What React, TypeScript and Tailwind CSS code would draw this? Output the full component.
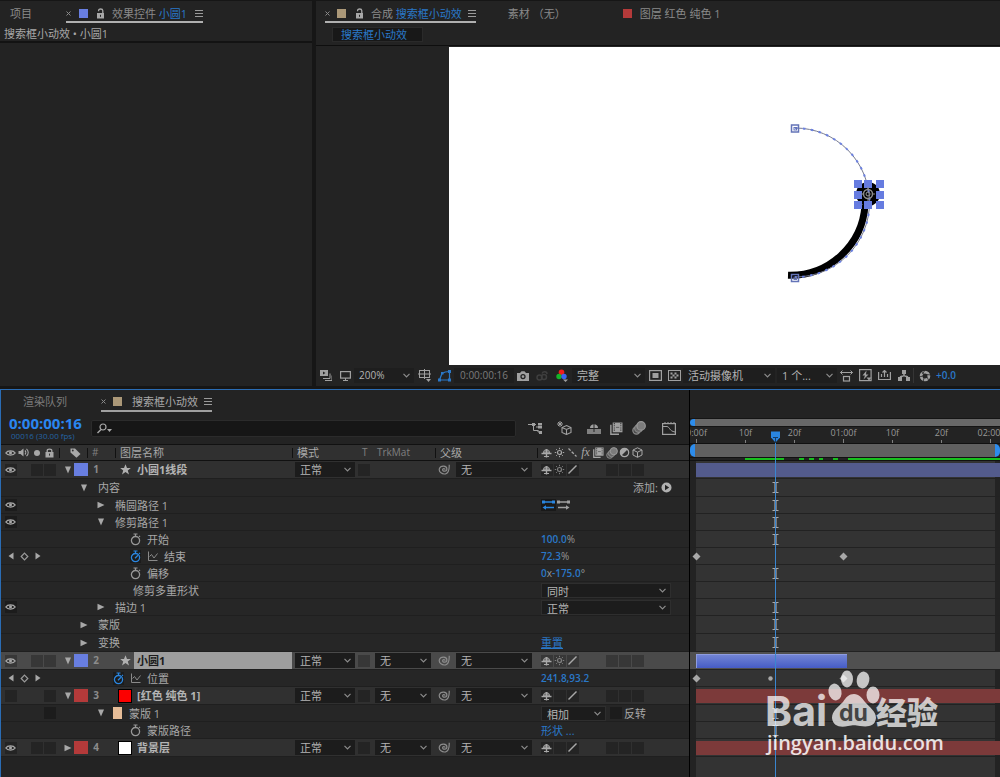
import type { ReactNode } from "react";

const PX_PER_FRAME = 4.9;
const PLAYHEAD = 16;

const BLUE = "#2a86e0";

type Kind = "layer" | "group" | "subgroup" | "prop";

type Row = {
  id: string;
  kind: Kind;
  name: string;
  eye?: boolean;
  num?: number;
  color?: string;
  source?: string;
  open?: boolean;
  selected?: boolean;
  trkMat?: boolean;
  collapse?: boolean;
  bar?: string;
  barFrames?: number;
  keys?: number[];
  roving?: number[];
  beam?: boolean;
  timed?: "off" | "on";
  indent?: string;
  nav?: boolean;
  lockBox?: boolean;
  swatch?: boolean;
  value?: ReactNode;
};

function Svg({ w, h, children, className = "" }: { w: number; h: number; children: ReactNode; className?: string }) {
  return (
    <svg width={w} height={h} viewBox={`0 0 ${w} ${h}`} fill="none" stroke="currentColor" className={`shrink-0 ${className}`} aria-hidden="true">
      {children}
    </svg>
  );
}

function Eye() {
  return (
    <Svg w={11} h={8}>
      <path d="M0.8 4C2.6 1.2 8.4 1.2 10.2 4C8.4 6.8 2.6 6.8 0.8 4Z" strokeWidth="1.3" />
      <circle cx="5.5" cy="3.8" r="1.5" fill="currentColor" stroke="none" />
    </Svg>
  );
}

function Unlock() {
  return (
    <Svg w={9} h={11} className="text-[#a8a8a8]">
      <rect x="1" y="5" width="7" height="5.5" fill="currentColor" stroke="none" />
      <path d="M2.6 3.2V2.4C2.6 0.5 6.6 0.5 6.8 2.6V5" strokeWidth="1.3" />
      <path d="M4.5 6.8v2" stroke="#232323" />
    </Svg>
  );
}

function Lock() {
  return (
    <Svg w={9} h={10}>
      <rect x="0.5" y="4" width="8" height="5.5" fill="currentColor" stroke="none" />
      <path d="M2.2 4.5V2.5C2.2 0.7 6.8 0.7 6.8 2.5v2" strokeWidth="1.3" />
      <path d="M4.5 5.6v2" stroke="#303030" />
    </Svg>
  );
}

function Menu() {
  return (
    <Svg w={8} h={8} className="text-[#9a9a9a]">
      <path d="M0 1.5h8M0 4.5h8M0 7.5h8" />
    </Svg>
  );
}

function Close() {
  return (
    <Svg w={5} h={5} className="text-[#8a8a8a]">
      <path d="M0.5 0.5l4 4M4.5 0.5l-4 4" />
    </Svg>
  );
}

function Twirl({ open }: { open?: boolean }) {
  return (
    <Svg w={10} h={8} className="text-[#a8a8a8]">
      {open ? <path d="M2 0.5h6L5 7.5Z" fill="currentColor" stroke="none" /> : <path d="M1.5 0.8v6.4L8.5 4Z" fill="currentColor" stroke="none" />}
    </Svg>
  );
}

function Stopwatch({ on }: { on?: boolean }) {
  return (
    <Svg w={11} h={13} className={on ? "bg-[#1c1c1c] text-[#2a86e0]" : "text-[#989898]"}>
      <circle cx="5.5" cy="7.6" r="4.1" strokeWidth="1.3" />
      <path d="M3.5 1h4M5.5 1v2.4M9 2.8l1 1" strokeWidth="1.2" />
      {on && <path d="M5 8.2l3-3" strokeWidth="1.3" />}
    </Svg>
  );
}

function Graph() {
  return (
    <Svg w={11} h={11} className="text-[#8a8a8a]">
      <path d="M1.5 0.5v9h9" />
      <path d="M2.5 5.5L4.5 3.5L7 7L10.5 2.5" />
    </Svg>
  );
}

function Shy() {
  return (
    <Svg w={11} h={10}>
      <path d="M2 5C2 0 9 0 9 5Z" fill="currentColor" stroke="none" />
      <path d="M0.5 5.5h10M5.5 1v8.5" strokeWidth="1.4" />
      <path d="M3 8.5h5" />
      <path d="M4 2.5v2M7 2.5v2" stroke="#303030" strokeWidth="0.8" />
    </Svg>
  );
}

function Sun() {
  return (
    <Svg w={11} h={11}>
      <circle cx="5.5" cy="5.5" r="2" strokeWidth="1.2" />
      <path d="M5.5 0.8v1.4M5.5 8.8v1.4M0.8 5.5h1.4M8.8 5.5h1.4M2.2 2.2l1 1M7.8 7.8l1 1M8.8 2.2l-1 1M3.2 7.8l-1 1" />
    </Svg>
  );
}

function Slash() {
  return (
    <Svg w={11} h={11}>
      <path d="M1.5 9.5l8-8" strokeWidth="1.5" />
    </Svg>
  );
}

function Film({ big }: { big?: boolean }) {
  return (
    <svg width={big ? 13 : 11} height={big ? 13 : 11} viewBox="0 0 12 12" fill="none" stroke="currentColor" aria-hidden="true">
      <path d="M0.8 2.5v8.8h7.5" strokeWidth="1.3" />
      <rect x="2.5" y="0.5" width="9" height="9" fill="currentColor" stroke="none" />
      <path d="M4 1v8M10 1v8" stroke="#333" strokeDasharray="1 1" />
      <path d="M5.5 5h3" stroke="#666" />
    </svg>
  );
}

function Blur({ big }: { big?: boolean }) {
  return (
    <svg width={big ? 14 : 12} height={big ? 14 : 12} viewBox="0 0 12 12" fill="none" aria-hidden="true">
      <circle cx="3.8" cy="8.2" r="3.1" fill="#4a4a4a" stroke="#8a8a8a" />
      <circle cx="5.6" cy="6.4" r="3.3" fill="#666" stroke="#8a8a8a" />
      <circle cx="7.8" cy="4.2" r="3.6" fill="#7c7c7c" stroke="#9a9a9a" />
    </svg>
  );
}

function Cube() {
  return (
    <Svg w={11} h={11}>
      <path d="M5.5 0.8L10 3v5L5.5 10.3L1 8V3ZM1 3l4.5 2.2L10 3M5.5 5.2v5" />
    </Svg>
  );
}

function Spiral() {
  return (
    <Svg w={12} h={11} className="text-[#8c8c8c]">
      <path d="M7.2 5.6C7 4.2 4.6 4.2 4.6 5.8C4.6 7.8 8.9 7.8 8.9 5C8.9 1.4 2.6 1 1.4 4.6C0.4 8.2 4.5 10.6 7.6 9.8C10.4 9 11.4 5.4 11.2 0.8" strokeWidth="1.2" />
    </Svg>
  );
}

function Select({ label, options, className, tone = "bg-[#1c1c1c]" }: { label: string; options: string[]; className: string; tone?: string }) {
  return (
    <span className={`relative flex h-[15px] shrink-0 items-center ${tone} ${className}`}>
      <select aria-label={label} className="h-full w-full appearance-none bg-transparent pl-[5px] leading-[15px] text-[#b4b4b4] outline-none">
        {options.map((o) => (
          <option key={o}>{o}</option>
        ))}
      </select>
      <Svg w={7} h={5} className="pointer-events-none absolute right-1 text-[#8c8c8c]">
        <path d="M0.5 0.8l3 3l3-3" strokeWidth="1.2" />
      </Svg>
    </span>
  );
}

function Box({ children, className = "text-[#a8a8a8]" }: { children?: ReactNode; className?: string }) {
  return (
    <span className="flex w-[13px] shrink-0 justify-center">
      <span className={`flex size-[12px] items-center justify-center bg-black/25 ${className}`}>{children}</span>
    </span>
  );
}

function Num({ children, unit }: { children: ReactNode; unit?: string }) {
  return (
    <button type="button" className="text-[10px] text-[#2a78c8]">
      <span className="font-semibold">{children}</span>
      {unit && <span className="text-[#989898]">{unit}</span>}
    </button>
  );
}

const ROWS: Row[] = [
  { id: "l1", kind: "layer", name: "小圆1线段", eye: true, num: 1, color: "#687ee0", source: "star", open: true, trkMat: false, collapse: true, bar: "bg-[#535b8c]" },
  {
    id: "contents",
    kind: "group",
    name: "内容",
    open: true,
    beam: true,
    value: (
      <button type="button" className="ml-[92px] flex items-center gap-[3px]">
        添加:
        <Svg w={11} h={11} className="text-[#b0b0b0]">
          <circle cx="5.5" cy="5.5" r="5" fill="currentColor" stroke="none" />
          <path d="M4 2.8v5.4L8.2 5.5Z" fill="#222" stroke="none" />
        </Svg>
      </button>
    ),
  },
  {
    id: "ellipse",
    kind: "subgroup",
    name: "椭圆路径 1",
    eye: true,
    beam: true,
    value: (
      <>
        <button type="button" aria-label="路径方向开" className="bg-[#191919] text-[#2a86e0]">
          <Svg w={15} h={12}>
            <path d="M2 3h11M4 8.5h9" strokeWidth="1.3" />
            <path d="M1 1.5h3v3h-3zM11 1.5h3v3h-3zM1.500 8.500L5 6.200v4.600z" fill="currentColor" stroke="none" />
          </Svg>
        </button>
        <button type="button" aria-label="路径方向关" className="text-[#a0a0a0]">
          <Svg w={15} h={12}>
            <path d="M2 3h11M2 8.5h9" strokeWidth="1.3" />
            <path d="M1 1.5h3v3h-3zM11 1.5h3v3h-3zM13.500 8.500L10 6.200v4.600z" fill="currentColor" stroke="none" />
          </Svg>
        </button>
      </>
    ),
  },
  { id: "trim", kind: "subgroup", name: "修剪路径 1", eye: true, open: true, beam: true },
  { id: "start", kind: "prop", name: "开始", timed: "off", beam: true, value: <Num unit="%">100.0</Num> },
  { id: "end", kind: "prop", name: "结束", timed: "on", nav: true, keys: [0, 30], value: <Num unit="%">72.3</Num> },
  {
    id: "offset",
    kind: "prop",
    name: "偏移",
    timed: "off",
    beam: true,
    value: (
      <Num unit="°">
        0<span className="font-normal text-[#989898]">x</span>-175.0
      </Num>
    ),
  },
  { id: "multi", kind: "prop", name: "修剪多重形状", indent: "pl-[78px]", value: <Select label="修剪多重形状" options={["同时", "单独"]} className="w-[130px] border border-[#2e2e2e]" /> },
  { id: "stroke", kind: "subgroup", name: "描边 1", eye: true, beam: true, value: <Select label="描边 1 模式" options={["正常", "相乘"]} className="w-[130px] border border-[#2e2e2e]" /> },
  { id: "masks1", kind: "group", name: "蒙版", beam: true },
  {
    id: "transform",
    kind: "group",
    name: "变换",
    beam: true,
    value: (
      <button type="button" className="text-[#2a78c8] underline">
        重置
      </button>
    ),
  },
  { id: "l2", kind: "layer", name: "小圆1", eye: true, num: 2, color: "#687ee0", source: "star", open: true, selected: true, trkMat: true, collapse: true, bar: "bg-linear-to-b from-[#7284d4] to-[#465cc6] border-l border-t border-[#8e9ce0]", barFrames: 31 },
  { id: "pos", kind: "prop", name: "位置", timed: "on", indent: "pl-[58px]", nav: true, keys: [0, 30], roving: [15], value: <Num>241.8,93.2</Num> },
  { id: "l3", kind: "layer", name: "[红色 纯色 1]", num: 3, color: "#b43a3a", source: "bg-[#fc0000]", open: true, trkMat: true, bar: "bg-[#7c3a3a]" },
  {
    id: "mask1",
    kind: "subgroup",
    name: "蒙版 1",
    open: true,
    swatch: true,
    lockBox: true,
    beam: true,
    value: (
      <>
        <Select label="蒙版模式" options={["相加", "相减"]} className="w-[65px] border border-[#2e2e2e]" />
        <label className="ml-1 flex items-center gap-[2px]">
          <input type="checkbox" className="size-[12px] appearance-none bg-[#1c1c1c] checked:bg-[#2a86e0]" />
          反转
        </label>
      </>
    ),
  },
  {
    id: "maskpath",
    kind: "prop",
    name: "蒙版路径",
    timed: "off",
    beam: true,
    value: (
      <button type="button" className="text-[#2a78c8]">
        形状 ...
      </button>
    ),
  },
  { id: "l4", kind: "layer", name: "背景层", eye: true, num: 4, color: "#b43a3a", source: "bg-white", trkMat: true, bar: "bg-[#7c3a3a]" },
];

// layers and top level groups are a pixel taller than the properties in them
function rowHeight(kind: Kind) {
  return kind === "layer" || kind === "group" ? "h-[18px]" : "h-[17px]";
}

function KeyNav() {
  return (
    <>
      <button type="button" aria-label="上一个关键帧" className="flex w-[13px] justify-center text-[#a8a8a8]">
        <Svg w={6} h={8}>
          <path d="M5.5 0.5v7L0.5 4Z" fill="currentColor" stroke="none" />
        </Svg>
      </button>
      <button type="button" aria-label="关键帧" className="flex w-[14px] justify-center text-[#9a9a9a]">
        <Svg w={9} h={9}>
          <path d="M4.5 1.2L7.8 4.5L4.5 7.8L1.2 4.5Z" strokeWidth="1.2" />
        </Svg>
      </button>
      <button type="button" aria-label="下一个关键帧" className="flex w-[13px] justify-center text-[#a8a8a8]">
        <Svg w={6} h={8}>
          <path d="M0.5 0.5v7l5-3.5Z" fill="currentColor" stroke="none" />
        </Svg>
      </button>
    </>
  );
}

function LayerRow({ row }: { row: Row }) {
  return (
    <div className={`flex items-center border-b border-[#1f1f1f] ${rowHeight(row.kind)} ${row.selected ? "bg-[#4a4a4a]" : "bg-[#303030]"}`}>
      <div className="flex w-[58px] shrink-0 pl-[3px]">
        <Box>{row.eye && <Eye />}</Box>
        <span className="w-[13px]" />
        {row.id === "l3" ? <span className="w-[13px]" /> : <Box />}
        <Box />
      </div>
      <button type="button" aria-label={`展开 ${row.name}`} className="ml-[2px] flex w-[13px] shrink-0 justify-center">
        <Twirl open={row.open} />
      </button>
      <span className="h-[13px] w-[14px] shrink-0" style={{ background: row.color }} />
      <span className="w-[16px] shrink-0 text-center text-[10px] font-bold text-[#8c8c8c]">{row.num}</span>
      <span className="ml-[14px] flex w-[14px] shrink-0 justify-center">
        {row.source === "star" ? (
          <Svg w={11} h={11} className="text-[#b0b0b0]">
            <path d="M5.5 0.3L7 4h3.8L7.8 6.4L9 10.4L5.5 8L2 10.4L3.2 6.4L0.2 4H4Z" fill="currentColor" stroke="none" />
          </Svg>
        ) : (
          <span className={`size-[14px] border border-black ${row.source}`} />
        )}
      </span>
      <span className={`ml-[2px] flex h-full min-w-0 flex-1 items-center pl-[3px] font-bold ${row.selected ? "bg-[#9e9e9e] text-[#1c1c1c]" : "text-[#b4b4b4]"}`}>{row.name}</span>
      <span className="flex w-[248px] shrink-0 items-center pl-[3px]">
        <Select label="模式" options={["正常", "相乘"]} className="w-[60px]" />
        <span className="ml-[2px] flex w-[18px]">
          <Box />
        </span>
        {row.trkMat ? <Select label="TrkMat" options={["无", "Alpha"]} className="w-[56px]" /> : <span className="w-[56px]" />}
        <span className="flex w-[25px] justify-center">
          <Spiral />
        </span>
        <Select label="父级" options={["无"]} className="w-[76px]" />
      </span>
      <span className="flex w-[149px] shrink-0">
        <Box>
          <Shy />
        </Box>
        <Box className="text-[#808080]">{row.collapse && <Sun />}</Box>
        <Box>
          <Slash />
        </Box>
        <span className="w-[26px]" />
        <Box />
        <Box />
        <Box />
      </span>
    </div>
  );
}

function PropRow({ row }: { row: Row }) {
  const indent = row.indent ?? (row.kind === "group" ? "pl-[24px]" : row.kind === "subgroup" ? "pl-[41px]" : "pl-[75px]");
  return (
    <div className={`flex items-center border-b border-[#1f1f1f] bg-[#262626] ${rowHeight(row.kind)}`}>
      <div className="flex w-[54px] shrink-0 items-center pl-[3px]">
        {row.nav && <KeyNav />}
        {row.eye && (
          <Box>
            <Eye />
          </Box>
        )}
        {row.lockBox && (
          <span className="ml-[39px] flex">
            <Box />
          </span>
        )}
      </div>
      <div className={`flex min-w-0 flex-1 items-center ${indent} ${row.kind === "prop" ? "gap-[6px]" : row.swatch ? "gap-[7px]" : "gap-[9px]"}`}>
        {row.kind !== "prop" && (
          <button type="button" aria-label={`展开 ${row.name}`}>
            <Twirl open={row.open} />
          </button>
        )}
        {row.swatch && <span className="h-[12px] w-[9px] bg-[#e6bd98]" />}
        {row.timed && <Stopwatch on={row.timed === "on"} />}
        {row.timed === "on" && <Graph />}
        <span>{row.name}</span>
      </div>
      <div className="flex w-[148px] shrink-0 items-center">{row.value}</div>
    </div>
  );
}

function Key({ frame, dot }: { frame: number; dot?: boolean }) {
  return (
    <span className="absolute top-0 -ml-[4px] flex h-full items-center text-[#a8a8a8]" style={{ left: Math.round(6 + frame * PX_PER_FRAME) }}>
      <Svg w={9} h={9}>
        {dot ? <circle cx="4.5" cy="4.5" r="2.2" fill="currentColor" stroke="none" /> : <path d="M4.5 0.5L8.5 4.5L4.5 8.5L0.5 4.5Z" fill="currentColor" stroke="none" />}
      </Svg>
    </span>
  );
}

function TrackRow({ row }: { row: Row }) {
  return (
    <div className={`relative flex items-center border-b border-[#222] pl-[6px] ${rowHeight(row.kind)} ${row.selected ? "bg-[#505050]" : ""}`}>
      {row.bar && <span className={`h-[14px] ${row.barFrames ? "" : "flex-1"} ${row.bar}`} style={row.barFrames ? { width: Math.floor(row.barFrames * PX_PER_FRAME) } : undefined} />}
      {row.keys?.map((k) => <Key key={k} frame={k} />)}
      {row.roving?.map((k) => <Key key={k} frame={k} dot />)}
      {row.beam && (
        <Svg w={7} h={11} className="ml-[76px] text-[#a8a8a8]">
          <path d="M0.5 0.5h6M0.5 10.5h6" />
          <path d="M3.5 0.5v10" strokeWidth="3" opacity="0.6" />
        </Svg>
      )}
    </div>
  );
}

function Watermark() {
  return (
    <svg width="190" height="110" viewBox="0 0 190 110" className="pointer-events-none absolute bottom-0 left-[72px]" fill="#fff" aria-hidden="true">
      <g opacity="0.72">
        <text x="3" y="59" fontSize="41" fontWeight="700" fontFamily="Inter, sans-serif">
          Bai
        </text>
        <ellipse cx="73" cy="25" rx="6.5" ry="8.5" transform="rotate(-12 73 25)" />
        <ellipse cx="85" cy="12" rx="6" ry="8.5" />
        <ellipse cx="101" cy="13" rx="6.3" ry="8.5" transform="rotate(10 101 13)" />
        <ellipse cx="111" cy="28" rx="6.5" ry="8.5" />
        <path d="M92 27C97 27 100 31 103 35C108 41 114 44 114 51C113 60 105 60 98 59C93 58 91 58 86 59C78 61 71 59 70 51C70 44 76 40 81 35C84 30 87 27 92 27Z" />
        <text x="114" y="57" fontSize="31" fontWeight="900" fontFamily="'Noto Sans CJK SC', sans-serif">
          经验
        </text>
      </g>
      <text x="77" y="54" fontSize="23" fontWeight="700" fontFamily="Inter, sans-serif" fill="#444">
        du
      </text>
      <text x="5" y="83" fontSize="20" fontWeight="600" fontFamily="'Open Sans', sans-serif" opacity="0.85">
        jingyan.baidu.com
      </text>
    </svg>
  );
}

// local coordinates of the composition view
function Canvas() {
  const handles = [
    [409, 137], [419, 137], [431, 137],
    [409, 148], [431, 148],
    [409, 158], [419, 158], [431, 158],
  ];
  return (
    <svg width="551" height="318" viewBox="0 0 551 318" fill="none" className="max-w-full">
      <path d="M339 228.300A75 75 0 0 0 416 158" stroke="#000" strokeWidth="7" />
      <circle cx="419" cy="147" r="12" fill="#000" />
      <path d="M346 81A74 74 0 0 1 346 230" stroke="#777b90" strokeWidth="1" />
      <path d="M346 81A74 74 0 0 1 346 230" stroke="#6b80e0" strokeWidth="2" strokeDasharray="2.500 5.500" />
      <g stroke="#6474b8" strokeWidth="1.500">
        <rect x="342.500" y="78" width="7" height="7" />
        <rect x="342.500" y="227.500" width="7" height="7" />
        <rect x="345" y="80.500" width="2.500" height="2.500" strokeWidth="1" />
        <rect x="345" y="230" width="2.500" height="2.500" strokeWidth="1" />
      </g>
      {handles.map(([x, y]) => (
        <rect key={`${x}-${y}`} x={x - 4} y={y - 4} width="8" height="8" fill="#667ce0" />
      ))}
      <circle cx="419" cy="147" r="4.500" stroke="#8c8c8c" strokeWidth="1.500" />
      <circle cx="419" cy="147" r="2" stroke="#999" />
      <path d="M419 140v3M419 151v3M412 147h3M423 147h3" stroke="#8c8c8c" />
    </svg>
  );
}

function EffectPanel() {
  return (
    <section className="flex w-[312px] shrink-0 flex-col bg-[#232323]">
      <nav className="flex h-[22px] items-stretch pl-[10px]">
        <button type="button" className="pt-[2px] text-[#8a8a8a]">项目</button>
        <div className="ml-[34px] flex items-center border-b-2 border-[#b0b0b0] pt-1">
          <Close />
          <span className="ml-2 size-[9px] bg-[#687ee0]" />
          <span className="ml-2 flex"><Unlock /></span>
          <button type="button" className="ml-[7px] text-[#8a8a8a]">
            效果控件 <span className="text-[#2a78c8]">小圆1</span>
          </button>
          <span className="ml-2 flex"><Menu /></span>
        </div>
      </nav>
      <h2 className="h-[20px] border-b-2 border-[#131313] pl-1 leading-[21px] text-[#a8a8a8]">搜索框小动效 • 小圆1</h2>
    </section>
  );
}

function ViewerBar() {
  return (
    <div className="flex h-[21px] items-center text-[#a0a0a0]">
      <span className="flex w-5 justify-center">
        <Svg w={12} h={11}>
          <rect x="0.5" y="0.5" width="7" height="5" fill="currentColor" />
          <path d="M3 8.500h7V3.500M5 10.500h7V5.500" />
          <path d="M3 1.500v3l2.500-1.500Z" fill="#232323" stroke="none" />
        </Svg>
      </span>
      <span className="flex w-[18px] justify-center">
        <Svg w={11} h={10}>
          <rect x="0.600" y="0.600" width="9.800" height="6.500" strokeWidth="1.200" />
          <path d="M3 9.500h5M5.500 7v2" />
        </Svg>
      </span>
      <Select label="缩放" options={["200%", "100%"]} tone="bg-[#1e1e1e]" className="w-[60px] text-[10px]" />
      <span className="flex w-5 justify-center">
        <Svg w={13} h={13}>
          <rect x="1.500" y="1.500" width="10" height="7" />
          <path d="M6.500 0v10M0 5h13" />
          <path d="M8 10h5l-2.500 3Z" fill="currentColor" stroke="none" />
        </Svg>
      </span>
      <button type="button" aria-label="蒙版可见性" className="flex w-5 justify-center text-[#2a78c8]">
        <Svg w={13} h={12}>
          <path d="M1.500 10L4 3.500C6 2 9 1.500 11.500 1.500V10Z" strokeWidth="1.200" />
          <path d="M0 8.500h3v3H0zM10 8.500h3v3h-3zM10 0h3v3h-3zM3 2h2.500v2.500H3z" fill="currentColor" stroke="none" />
        </Svg>
      </button>
      <span className="flex h-[15px] w-[60px] items-center justify-center bg-[#1e1e1e] text-[10px] text-[#7c7c7c]">0:00:00:16</span>
      <span className="flex w-[18px] justify-center">
        <Svg w={12} h={10}>
          <path d="M0 2h3l1.500-1.800h3L9 2h3v8H0Z" fill="currentColor" stroke="none" />
          <circle cx="6" cy="5.600" r="2" stroke="#232323" strokeWidth="1.300" />
        </Svg>
      </span>
      <span className="flex w-5 justify-center text-[#3e3e3e]">
        <Svg w={12} h={11}>
          <circle cx="3.500" cy="7.500" r="2.500" strokeWidth="1.500" />
          <circle cx="8" cy="7" r="2.500" strokeWidth="1.500" />
          <path d="M6 3.500C7 1 11 1 11 4" strokeWidth="1.500" />
        </Svg>
      </span>
      <span className="flex w-5 justify-center">
        <Svg w={12} h={13}>
          <g stroke="none">
            <circle cx="5.500" cy="3.300" r="2.800" fill="#f01c1c" />
            <circle cx="3" cy="7.500" r="2.700" fill="#14b428" />
            <circle cx="8" cy="7.500" r="2.700" fill="#3c64f0" />
            <path d="M7 10.500h5L9.500 13Z" fill="#a0a0a0" />
          </g>
        </Svg>
      </span>
      <Select label="分辨率" options={["完整", "二分之一"]} tone="bg-[#1e1e1e]" className="w-[73px]" />
      <span className="flex w-5 justify-center">
        <Svg w={13} h={11}>
          <rect x="0.600" y="0.600" width="11.800" height="9.800" strokeWidth="1.200" />
          <rect x="3.500" y="3" width="6" height="5" fill="currentColor" stroke="none" />
        </Svg>
      </span>
      <span className="flex w-[18px] justify-center">
        <Svg w={13} h={11}>
          <rect x="0.500" y="0.500" width="12" height="10" />
          <path d="M2.500 2.500h2v2h-2zM6.500 2.500h2v2h-2zM4.500 4.500h2v2h-2zM8.500 4.500h2v2h-2zM2.500 6.500h2v2h-2zM6.500 6.500h2v2h-2z" fill="currentColor" stroke="none" />
        </Svg>
      </span>
      <Select label="3D 视图" options={["活动摄像机", "正面"]} tone="bg-[#1e1e1e]" className="w-[92px]" />
      <Select label="视图布局" options={["1 个...", "2 个"]} tone="bg-[#1e1e1e]" className="ml-[2px] w-[60px]" />
      <span className="flex w-[19px] justify-center">
        <Svg w={13} h={12}>
          <path d="M0.500 2.500h12M2.500 0.500l-2 2l2 2M10.500 0.500l2 2l-2 2" />
          <rect x="3.500" y="6.500" width="6" height="4.500" strokeWidth="1.200" />
        </Svg>
      </span>
      <span className="flex w-[19px] justify-center">
        <Svg w={13} h={13}>
          <rect x="0.600" y="0.600" width="11.500" height="11" strokeWidth="1.200" />
          <path d="M7.500 1.500L3.500 6.500h2.500L4.500 10.500L9.500 5.500H7Z" fill="currentColor" stroke="none" />
          <path d="M7.500 8.500h5L10 11.500Z" fill="currentColor" stroke="none" />
        </Svg>
      </span>
      <span className="flex w-[19px] justify-center">
        <Svg w={13} h={11}>
          <path d="M0.600 2v7.500h11.800V2M3.500 4v3M6.500 0.500v6.500M9.500 4v3M4.500 2.500l2-2l2 2" strokeWidth="1.200" />
        </Svg>
      </span>
      <span className="flex w-[19px] justify-center">
        <Svg w={12} h={11}>
          <path d="M4 0h4v4H4zM0 7h4v4H0zM8 7h4v4H8z" fill="currentColor" stroke="none" />
          <path d="M6 4v2M2 7L6 5.500L10 7" strokeWidth="1.500" />
        </Svg>
      </span>
      <span className="h-[15px] w-px bg-[#353535]" />
      <span className="flex w-[22px] justify-center">
        <Svg w={12} h={12}>
          <circle cx="6" cy="6" r="3.900" strokeWidth="2.800" />
          <path d="M6 0l-2.500 4M12 5L7.500 4.500M10 11L8 7M4 12l1-4M0 7l4-1M2 1l2.500 3" stroke="#232323" strokeWidth="0.800" />
        </Svg>
      </span>
      <button type="button" className="text-[10px] font-semibold text-[#2a78c8]">+0.0</button>
    </div>
  );
}

function CompPanel() {
  return (
    <section className="flex min-w-0 flex-1 flex-col bg-[#232323]">
      <nav className="flex h-[22px] items-stretch pl-[9px] text-[#8a8a8a]">
        <div className="flex items-center border-b-2 border-[#b0b0b0] pt-1">
          <Close />
          <span className="ml-[7px] size-[9px] bg-[#ab9878]" />
          <span className="ml-[9px] flex"><Unlock /></span>
          <button type="button" className="ml-[7px]">
            合成 <span className="text-[#2a78c8]">搜索框小动效</span>
          </button>
          <span className="ml-[6px] flex"><Menu /></span>
        </div>
        <button type="button" className="ml-[32px] pt-[2px]">素材 （无）</button>
        <button type="button" className="ml-[57px] flex items-center gap-2 pt-[2px]">
          <span className="size-[9px] bg-[#b43a3a]" />
          图层 红色 纯色 1
        </button>
      </nav>
      <div className="flex h-[23px] items-center border-b border-[#0e0e0e] pl-4">
        <button type="button" className="h-[15px] w-[91px] border border-[#2a2a2a] bg-[#181818] pl-2 text-left leading-[13px] text-[#2a78c8]">搜索框小动效</button>
      </div>
      <div className="flex border-t border-[#232323] pl-[133px]">
        <div className="min-w-0 flex-1 overflow-hidden bg-white">
          <Canvas />
        </div>
      </div>
      <ViewerBar />
    </section>
  );
}

function Divider() {
  return <span className="h-[10px] w-px shrink-0 bg-[#111]" />;
}

function OutlineHeader() {
  return (
    <div className="flex h-[17px] items-center border-y border-[#111] bg-[#303030] text-[#a8a8a8]">
      <span className="flex w-[58px] shrink-0 items-center pl-[3px]">
        <span className="flex w-[13px] justify-center"><Eye /></span>
        <span className="flex w-[13px] justify-center">
          <Svg w={11} h={9}>
            <path d="M0.500 3h2L5.500 0.500v8L2.500 6h-2Z" fill="currentColor" stroke="none" />
            <path d="M7 2.500C8 3.500 8 5.500 7 6.500M8.500 0.800C10.800 3 10.800 6 8.500 8.200" strokeWidth="1.100" />
          </Svg>
        </span>
        <span className="flex w-[13px] justify-center"><span className="size-[6px] rounded-full bg-[#a8a8a8]" /></span>
        <span className="flex w-[13px] justify-center"><Lock /></span>
      </span>
      <Divider />
      <span className="flex w-[27px] shrink-0 justify-center pl-1">
        <Svg w={11} h={10}>
          <path d="M0.500 0.500h4.500L10.500 6L6.500 9.800L0.500 4.500Z" fill="currentColor" stroke="none" />
          <circle cx="2.800" cy="2.500" r="0.900" fill="#303030" stroke="none" />
        </Svg>
      </span>
      <Divider />
      <span className="w-[27px] shrink-0 pl-1 text-[10px] text-[#808080]">#</span>
      <Divider />
      <span className="min-w-0 flex-1 pl-[4px]">图层名称</span>
      <span className="flex w-[248px] shrink-0 items-center">
        <Divider />
        <span className="w-[69px] pl-[4px]">模式</span>
        <span className="w-[15px] text-[10px] text-[#808080]">T</span>
        <span className="w-[58px] text-[10px] text-[#808080]">TrkMat</span>
        <Divider />
        <span className="flex-1 pl-[4px]">父级</span>
        <Divider />
        <span className="w-[2px]" />
      </span>
      <span className="flex w-[149px] shrink-0 items-center *:flex *:w-[13px] *:justify-center">
        <span><Shy /></span>
        <span><Sun /></span>
        <span>
          <Svg w={11} h={11}>
            <path d="M1.500 1.500l8 8" strokeDasharray="3 1.500" strokeWidth="1.300" />
          </Svg>
        </span>
        <span className="font-['Liberation_Serif',serif] text-[12px] italic">fx</span>
        <span><Film /></span>
        <span><Blur /></span>
        <span>
          <Svg w={11} h={11}>
            <circle cx="5.500" cy="5.500" r="4.200" strokeWidth="1.200" />
            <path d="M8.500 2.500A4.200 4.200 0 0 0 2.500 8.500Z" fill="currentColor" stroke="none" />
          </Svg>
        </span>
        <span><Cube /></span>
      </span>
    </div>
  );
}

function Outline() {
  return (
    <div className="flex w-[688px] shrink-0 flex-col">
      <nav className="flex h-[22px] items-stretch pl-[22px]">
        <button type="button" className="text-[#7c7c7c]">渲染队列</button>
        <div className="ml-[34px] flex items-center border-b-2 border-[#a0a0a0] pt-[2px]">
          <Close />
          <span className="ml-[7px] size-[9px] bg-[#ab9878]" />
          <button type="button" className="ml-[10px]">搜索框小动效</button>
          <span className="ml-[6px] flex"><Menu /></span>
        </div>
      </nav>
      <div className="flex h-[32px] items-center">
        <div className="w-[90px] shrink-0 pl-2">
          <div className="text-[15px] leading-[15px] font-bold text-[#2a86f0]">0:00:00:16</div>
          <div className="pl-[2px] text-[8px] leading-[10px] text-[#2464a4]">00016 (30.00 fps)</div>
        </div>
        <label className="relative flex h-[17px] min-w-0 flex-1 items-center rounded-[2px] border border-[#2b2b2b] bg-[#161616]">
          <Svg w={16} h={11} className="ml-[5px] text-[#a8a8a8]">
            <circle cx="6" cy="4" r="3" strokeWidth="1.200" />
            <path d="M4 6.500L0.500 10" strokeWidth="1.400" />
            <path d="M10 6h5L12.500 9Z" fill="currentColor" stroke="none" />
          </Svg>
          <input type="search" aria-label="搜索图层" className="h-full w-full bg-transparent pl-1 text-[#b4b4b4] outline-none" />
        </label>
        <div className="flex w-[173px] shrink-0 items-center pl-[12px] text-[#a0a0a0]">
          <span className="flex w-[14px]">
            <Svg w={14} h={12}>
              <path d="M0 2.500h8M5.500 2.500v6h5M8 5h4M10 8.500v1.500h4" />
              <path d="M4 1h3v3H4zM10 1h4v2.500h-4zM10 4h4v2.500h-4zM11 9h3v3h-3z" fill="currentColor" stroke="none" />
            </Svg>
          </span>
          <span className="ml-[15px] flex w-[14px]">
            <Svg w={15} h={14}>
              <path d="M9.500 4.500L14 6.500v5L9.500 13.500L5 11.500v-5ZM5 6.500l4.500 2L14 6.500M9.500 8.500v5" strokeWidth="1.100" />
              <path d="M3 0v6M0 3h6M1 1l4 4M5 1L1 5" />
            </Svg>
          </span>
          <span className="ml-[16px] flex w-[14px]">
            <Svg w={14} h={11}>
              <path d="M3 5C3 0 11 0 11 5Z" fill="currentColor" stroke="none" />
              <path d="M0 6h14v5H0z" fill="#808080" stroke="none" />
              <path d="M7 1v8M4 5.500h7" stroke="#232323" />
            </Svg>
          </span>
          <span className="ml-[9px] flex w-[14px]"><Film big /></span>
          <span className="ml-2 flex w-[14px]"><Blur big /></span>
          <span className="ml-[16px] flex w-[14px]">
            <Svg w={14} h={13}>
              <rect x="0.600" y="1.600" width="12.800" height="10.800" strokeWidth="1.200" />
              <path d="M1 4.500h4C8 5 7 9 13 10" />
              <path d="M3 0v2M6 0v2M9 0v2M12 0v2" />
            </Svg>
          </span>
        </div>
      </div>
      <OutlineHeader />
      <div className="flex flex-col">{ROWS.map((r) => (r.kind === "layer" ? <LayerRow key={r.id} row={r} /> : <PropRow key={r.id} row={r} />))}</div>
    </div>
  );
}

const TICKS = ["0:00f", "10f", "20f", "01:00f", "10f", "20f", "02:00f"];
const CACHED = [
  [10, 18],
  [21, 22],
  [23, 24],
  [25, 26],
  [28, 29],
  [31, 63],
];

function Tracks() {
  return (
    <div className="relative flex min-w-0 flex-1 flex-col overflow-hidden border-l border-black">
      <div className="h-[28px]" />
      <div className="flex h-[9px] border-y border-[#151515]">
        <span className="w-[5px] rounded-l-full bg-[#2d8ceb]" />
        <span className="flex-1 bg-[#686868]" />
      </div>
      <div className="-ml-[18px] flex h-[16px] overflow-hidden text-[9px] text-[#989898]">
        {TICKS.map((t, i) => (
          <span key={i} className="flex w-[49px] shrink-0 flex-col items-center justify-between leading-[12px]">
            {t}
            <span className={`w-px bg-[#808080] ${i % 3 === 0 ? "h-[5px]" : "h-[3px]"}`} />
          </span>
        ))}
      </div>
      <div className="flex h-[15px] border-y border-[#111]">
        <span className="w-[5px] rounded-l-full bg-[#2d8ceb]" />
        <span className="flex-1 bg-[#606060]" />
        <span className="w-[5px] rounded-r-full bg-[#2d8ceb]" />
      </div>
      <div className="relative h-[3px] border-b border-[#111]">
        {CACHED.map(([a, b]) => (
          <span key={a} className="absolute top-0 h-[2px] bg-[#18c01e]" style={{ left: 6 + a * PX_PER_FRAME, width: (b - a) * PX_PER_FRAME }} />
        ))}
      </div>
      <div className="relative flex-1">
        <div className="absolute inset-y-0 right-[5px] left-[6px] bg-[#333]" />
        <div className="relative">{ROWS.map((r) => <TrackRow key={r.id} row={r} />)}</div>
      </div>
      <div className="absolute top-[41px] bottom-0 -ml-[4px] flex w-[11px] flex-col items-center" style={{ left: Math.round(6 + PLAYHEAD * PX_PER_FRAME) }}>
        <Svg w={11} h={12}>
          <path d="M1 0.500h9v6L5.500 11.500L1 6.500Z" fill={BLUE} stroke="none" />
          <path d="M3 6.500h5M5.500 6.500v5" stroke="#163c66" />
        </Svg>
        <span className="w-px flex-1 bg-[#3a86d0]" />
      </div>
      <Watermark />
    </div>
  );
}

export default function App() {
  return (
    <main className="flex min-h-screen flex-col overflow-hidden bg-[#161616] font-['Open_Sans','Noto_Sans_CJK_SC',sans-serif] text-[11px] leading-[15px] text-[#a8a8a8]">
      <div className="flex gap-1 border-t border-[#161616] pb-[3px]">
        <EffectPanel />
        <CompPanel />
      </div>
      <section className="flex flex-1 border-t border-l border-[#2a6cb4] bg-[#232323]">
        <Outline />
        <Tracks />
      </section>
    </main>
  );
}
